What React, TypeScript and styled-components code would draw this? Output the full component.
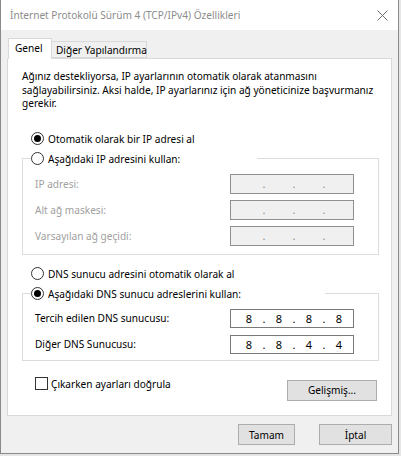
import React from "react";
import styled, { createGlobalStyle } from "styled-components";

const FONT = `"Noto Sans", "Liberation Sans", sans-serif`;

const GlobalStyle = createGlobalStyle`
  html, body { margin: 0; padding: 0; }
  body {
    width: 401px;
    height: 456px;
    overflow: hidden;
    background: #e6e6e6;
    font-family: ${FONT};
    font-size: 10.1px;
    color: #000;
  }
  * { box-sizing: border-box; }
`;

const Win = styled.div`
  width: 399px;
  height: 454px;
  background: #f0f0f0;
  border: 1px solid #8a8a8a;
  border-top: none;
  display: flex;
  flex-direction: column;
`;

const TitleBar = styled.div`
  height: 30px;
  background: #fff;
  display: flex;
  align-items: center;
  justify-content: space-between;
  padding: 0 10px 0 9px;
`;

const Title = styled.span`
  color: #8c8c8c;
  font-size: 10.1px;
  white-space: nowrap;
`;

const Body = styled.div`
  padding: 8px 6px 0 6px;
  display: flex;
  flex-direction: column;
`;

const TabRow = styled.div`
  display: flex;
  align-items: flex-end;
  height: 20px;
  padding-left: 1px;
`;

const Tab = styled.div<{ $active?: boolean }>`
  height: ${(p) => (p.$active ? "21px" : "17px")};
  margin-bottom: ${(p) => (p.$active ? "-1px" : "0")};
  width: ${(p) => (p.$active ? "44px" : "95px")};
  background: ${(p) => (p.$active ? "#fff" : "#f0f0f0")};
  border: 1px solid #d9d9d9;
  border-bottom: ${(p) => (p.$active ? "none" : "1px solid #d9d9d9")};
  border-left: ${(p) => (p.$active ? "1px solid #d9d9d9" : "none")};
  position: relative;
  z-index: 1;
  display: flex;
  align-items: center;
  padding-left: ${(p) => (p.$active ? "6px" : "4px")};
  padding-bottom: ${(p) => (p.$active ? "2px" : "0")};
  white-space: nowrap;
`;

const Panel = styled.div`
  height: 358px;
  width: 385px;
  background: #fff;
  border: 1px solid #d9d9d9;
  padding: 11px 12px 0 14px;
  display: flex;
  flex-direction: column;
`;

const Desc = styled.div`
  line-height: 13.5px;
  white-space: nowrap;
`;

const RadioRow = styled.label<{ $mt?: number }>`
  display: flex;
  align-items: center;
  height: 20px;
  gap: 4px;
  margin-top: ${(p) => p.$mt ?? 0}px;
  padding-left: ${(p) => (p.$mt !== undefined ? 9 : 0)}px;
  white-space: nowrap;
`;

const RadioCircle = styled.span<{ $on?: boolean }>`
  width: 13px;
  height: 13px;
  border-radius: 50%;
  border: 1px solid #333;
  background: #fff;
  display: flex;
  align-items: center;
  justify-content: center;
  flex: none;
  &::after {
    content: "";
    width: 7px;
    height: 7px;
    border-radius: 50%;
    background: ${(p) => (p.$on ? "#000" : "transparent")};
  }
`;

const Group = styled.fieldset<{ $pb: number }>`
  margin: 0;
  border: 1px solid #dcdcdc;
  padding: 0 24px ${(p) => p.$pb}px 8px;
  min-width: 0;
`;

const Legend = styled.legend<{ $w: number }>`
  padding: 0;
  margin: 0;
  width: ${(p) => p.$w}px;
`;

const Fields = styled.div<{ $gap: number }>`
  display: flex;
  flex-direction: column;
  gap: ${(p) => p.$gap}px;
  padding: 5px 0 0 4px;
`;

const FieldRow = styled.div<{ $disabled?: boolean }>`
  display: flex;
  align-items: center;
  justify-content: space-between;
  color: ${(p) => (p.$disabled ? "#a0a0a0" : "#000")};
`;

const IpBox = styled.div<{ $disabled?: boolean; $h: number }>`
  width: 124px;
  height: ${(p) => p.$h}px;
  border: 1px solid ${(p) => (p.$disabled ? "#8f8f8f" : "#7a7a7a")};
  background: ${(p) => (p.$disabled ? "#f0f0f0" : "#fff")};
  display: flex;
  align-items: center;
  padding-left: 5px;
  font-size: 11px;
  color: ${(p) => (p.$disabled ? "#8a8a8a" : "#000")};
`;

const Octet = styled.span`
  width: 26px;
  text-align: center;
`;

const Dot = styled.span`
  width: 4px;
  text-align: center;
`;

const BottomRow = styled.div`
  display: flex;
  justify-content: space-between;
  align-items: flex-start;
  margin-top: 16px;
  padding: 0 2px 0 13px;
`;

const CheckLabel = styled.label`
  display: flex;
  align-items: center;
  gap: 3px;
  height: 14px;
  white-space: nowrap;
`;

const CheckBox = styled.span`
  width: 13px;
  height: 13px;
  border: 1px solid #333;
  background: #fff;
  flex: none;
`;

const Button = styled.button<{ $w: number; $mt?: number }>`
  width: ${(p) => p.$w}px;
  height: 21px;
  margin-top: ${(p) => p.$mt ?? 0}px;
  background: #e1e1e1;
  border: 1px solid #adadad;
  font-family: ${FONT};
  font-size: 10.1px;
  color: #000;
  padding: 0;
  display: flex;
  align-items: center;
  justify-content: center;
`;

const Footer = styled.div`
  display: flex;
  justify-content: flex-end;
  gap: 24px;
  margin-top: 8px;
`;

const CloseIcon = () => (
  <svg width="11" height="11" viewBox="0 0 11 11">
    <path d="M0.5 0.5 L10.5 10.5 M10.5 0.5 L0.5 10.5" stroke="#6e6e6e" strokeWidth="1" fill="none" />
  </svg>
);

const Ip: React.FC<{ value?: string[]; disabled?: boolean; h: number }> = ({ value, disabled, h }) => {
  const parts = value ?? ["", "", "", ""];
  return (
    <IpBox $disabled={disabled} $h={h}>
      {parts.map((v, i) => (
        <React.Fragment key={i}>
          <Octet>{v}</Octet>
          {i < 3 && <Dot>.</Dot>}
        </React.Fragment>
      ))}
    </IpBox>
  );
};

export default function App() {
  return (
    <>
      <GlobalStyle />
      <Win>
        <TitleBar>
          <Title>İnternet Protokolü Sürüm 4 (TCP/IPv4) Özellikleri</Title>
          <CloseIcon />
        </TitleBar>
        <Body>
          <TabRow>
            <Tab $active>Genel</Tab>
            <Tab>Diğer Yapılandırma</Tab>
          </TabRow>
          <Panel>
            <Desc>
              Ağınız destekliyorsa, IP ayarlarının otomatik olarak atanmasını
              <br />
              sağlayabilirsiniz. Aksi halde, IP ayarlarınız için ağ yöneticinize başvurmanız
              <br />
              gerekir.
            </Desc>
            <RadioRow $mt={18}>
              <RadioCircle $on />
              Otomatik olarak bir IP adresi al
            </RadioRow>
            <Group $pb={8}>
              <Legend $w={226}>
                <RadioRow>
                  <RadioCircle />
                  Aşağıdaki IP adresini kullan:
                </RadioRow>
              </Legend>
              <Fields $gap={6}>
                <FieldRow $disabled>
                  IP adresi:
                  <Ip disabled h={20} />
                </FieldRow>
                <FieldRow $disabled>
                  Alt ağ maskesi:
                  <Ip disabled h={20} />
                </FieldRow>
                <FieldRow $disabled>
                  Varsayılan ağ geçidi:
                  <Ip disabled h={20} />
                </FieldRow>
              </Fields>
            </Group>
            <RadioRow $mt={9}>
              <RadioCircle />
              DNS sunucu adresini otomatik olarak al
            </RadioRow>
            <Group $pb={6}>
              <Legend $w={294}>
                <RadioRow>
                  <RadioCircle $on />
                  Aşağıdaki DNS sunucu adreslerini kullan:
                </RadioRow>
              </Legend>
              <Fields $gap={7}>
                <FieldRow>
                  Tercih edilen DNS sunucusu:
                  <Ip value={["8", "8", "8", "8"]} h={19} />
                </FieldRow>
                <FieldRow>
                  Diğer DNS Sunucusu:
                  <Ip value={["8", "8", "4", "4"]} h={19} />
                </FieldRow>
              </Fields>
            </Group>
            <BottomRow>
              <CheckLabel>
                <CheckBox />
                Çıkarken ayarları doğrula
              </CheckLabel>
              <Button $w={90} $mt={3}>Gelişmiş...</Button>
            </BottomRow>
          </Panel>
          <Footer>
            <Button $w={57}>Tamam</Button>
            <Button $w={73}>İptal</Button>
          </Footer>
        </Body>
      </Win>
    </>
  );
}
